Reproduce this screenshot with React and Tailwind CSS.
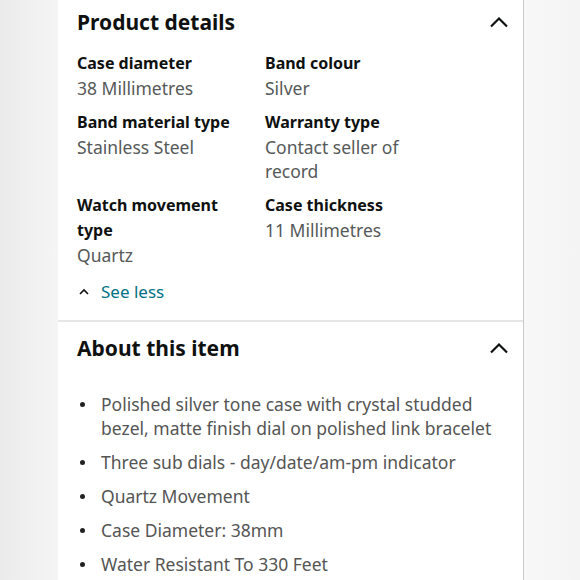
import React from 'react'

const details = [
  [
    { label: 'Case diameter', value: '38 Millimetres' },
    { label: 'Band colour', value: 'Silver' },
  ],
  [
    { label: 'Band material type', value: 'Stainless Steel' },
    { label: 'Warranty type', value: 'Contact seller of record' },
  ],
  [
    { label: 'Watch movement type', value: 'Quartz' },
    { label: 'Case thickness', value: '11 Millimetres' },
  ],
]

const bullets = [
  'Polished silver tone case with crystal studded bezel, matte finish dial on polished link bracelet',
  'Three sub dials - day/date/am-pm indicator',
  'Quartz Movement',
  'Case Diameter: 38mm',
  'Water Resistant To 330 Feet',
]

function ChevronUp() {
  return (
    <svg width="20" height="12" viewBox="0 0 20 12" fill="none" className="shrink-0">
      <path d="M2 10.5 L10 2.5 L18 10.5" stroke="#0f1111" strokeWidth="2.2" />
    </svg>
  )
}

function Detail({ label, value }) {
  return (
    <div className="pr-[14px]">
      <div className="text-[16px] leading-[25px] font-bold text-[#0f1111]">{label}</div>
      <div className="text-[17.5px] leading-[24px] text-[#565959]">{value}</div>
    </div>
  )
}

export default function App() {
  return (
    <div className="flex h-[580px] w-[580px] overflow-hidden bg-white font-['Noto_Sans',sans-serif]">
      <div className="w-[58px] shrink-0 bg-gradient-to-r from-[#ebebeb] to-[#f5f5f5]" />

      <div className="w-[466px] shrink-0 border-r border-[#c9c9c9] bg-white">
        <section className="pl-[19px] pr-[14px] pt-[8px] pb-[16px]">
          <div className="flex items-center justify-between">
            <h2 className="text-[21px] leading-[28px] font-bold text-[#0f1111]">Product details</h2>
            <ChevronUp />
          </div>
          <div className="mt-[15px] flex flex-col gap-[10px]">
            {details.map((row, i) => (
              <div key={i} className="grid grid-cols-[188px_170px]">
                {row.map((d) => (
                  <Detail key={d.label} {...d} />
                ))}
              </div>
            ))}
          </div>
          <div className="mt-[13px] flex items-center gap-[11px]">
            <svg width="12" height="8" viewBox="0 0 12 8" fill="none" className="ml-[1px]">
              <path d="M2 6 L6 2 L10 6" stroke="#0f1111" strokeWidth="1.6" />
            </svg>
            <span className="text-[17px] leading-[24px] text-[#007185]">See less</span>
          </div>
        </section>

        <div className="h-[2px] bg-[#e6e6e6]" />

        <section className="pl-[19px] pr-[14px] pt-[12px]">
          <div className="flex items-center justify-between">
            <h2 className="text-[21px] leading-[28px] font-bold text-[#0f1111]">About this item</h2>
            <ChevronUp />
          </div>
          <ul className="mt-[30px] flex flex-col gap-[10px]">
            {bullets.map((b) => (
              <li key={b} className="flex">
                <span className="flex h-[24px] w-[24px] shrink-0 items-center justify-start pl-[3px]">
                  <span className="h-[5px] w-[5px] rounded-full bg-[#222]" />
                </span>
                <span className="text-[17.5px] leading-[24px] text-[#555555]">{b}</span>
              </li>
            ))}
          </ul>
        </section>
      </div>

      <div className="flex-1 bg-gradient-to-r from-[#f8f8f8] to-[#f4f4f4]" />
    </div>
  )
}
